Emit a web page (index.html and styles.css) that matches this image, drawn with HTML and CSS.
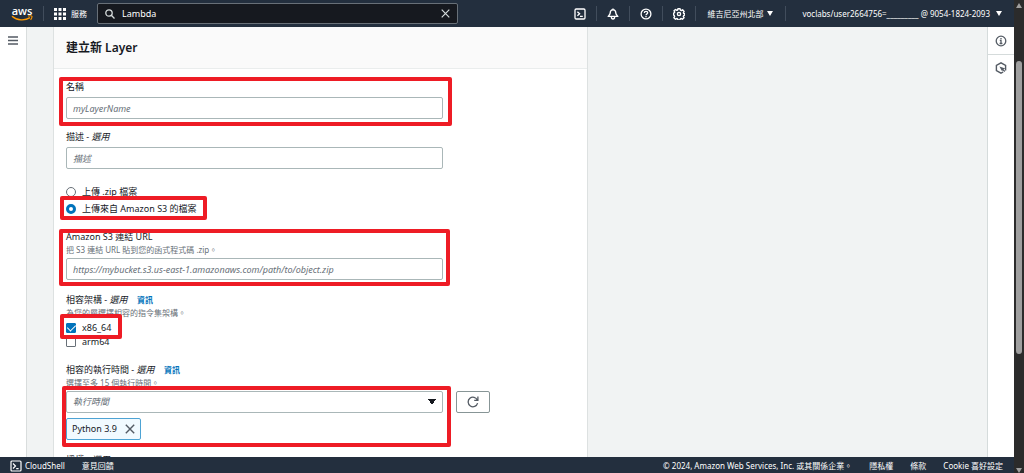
FILE: index.html
```html
<!DOCTYPE html>
<html lang="zh-Hant">
<head>
    <meta charset="UTF-8">
    <meta name="viewport" content="width=device-width, initial-scale=1.0">
    <title>Lambda - 建立新 Layer</title>
    <link rel="stylesheet" href="styles.css">
</head>
<body>
    <div class="page">
        <header class="topbar">
            <a href="#" class="logo">
                <span>aws</span>
                <svg width="22" height="6" viewBox="0 0 22 6" fill="none" stroke="#f90">
                    <path d="M1 1.2C6 5.6 14 6 19 2.6" stroke-width="1.4"/>
                    <path d="M17 1C19 .6 20.6.7 20.9 1.2 21.1 1.8 20.5 3.6 19.6 4.8" stroke-width="1.1"/>
                </svg>
            </a>
            <button type="button" class="services">
                <svg width="12" height="12" viewBox="0 0 12 12" fill="#fff">
                    <path d="M0 0h3v3H0zM4.5 0h3v3h-3zM9 0h3v3H9zM0 4.5h3v3H0zM4.5 4.5h3v3h-3zM9 4.5h3v3H9zM0 9h3v3H0zM4.5 9h3v3h-3zM9 9h3v3H9z"/>
                </svg>
                服務
            </button>
            <div class="search">
                <svg width="10" height="10" viewBox="0 0 10 10" fill="none" stroke="#d5dbdb" stroke-width="1.3">
                    <circle cx="4" cy="4" r="3.2"/>
                    <path d="M6.3 6.3 9.5 9.5"/>
                </svg>
                <input type="text" value="Lambda" aria-label="搜尋">
                <button type="button" aria-label="清除">
                    <svg width="9" height="9" viewBox="0 0 9 9" stroke="#d5dbdb" stroke-width="1.2">
                        <path d="M.7.7 8.3 8.3M8.3.7.7 8.3"/>
                    </svg>
                </button>
            </div>
            <nav class="tools">
                <button type="button" class="tool" aria-label="CloudShell">
                    <svg width="12" height="12" viewBox="0 0 12 12" fill="none" stroke="#fff" stroke-width="1.3">
                        <rect x="1" y="1" width="10" height="10" rx="1.2"/>
                        <path d="M3.4 3.8 5.6 5.8 3.4 7.8M6 8.4h2.8"/>
                    </svg>
                </button>
                <button type="button" class="tool" aria-label="通知">
                    <svg width="12" height="12" viewBox="0 0 12 12" fill="none" stroke="#fff" stroke-width="1.4" stroke-linejoin="round">
                        <path d="M6 .5v1.3M6 1.8C4.2 1.8 3.3 3 3.3 4.6 3.3 6.2 2.3 7 1.2 8.4H10.8C9.7 7 8.7 6.2 8.7 4.6 8.7 3 7.8 1.8 6 1.8Z"/>
                        <path d="M4.4 9a1.6 2 0 0 0 3.2 0"/>
                    </svg>
                </button>
                <button type="button" class="tool" aria-label="說明">
                    <svg width="12" height="12" viewBox="0 0 12 12" fill="none" stroke="#fff" stroke-width="1.3">
                        <circle cx="6" cy="6" r="4.9"/>
                        <path d="M4.3 4.9C4.3 2.7 7.7 2.8 7.7 4.8 7.7 5.9 6 5.8 6 7.2M6 8v1.2"/>
                    </svg>
                </button>
                <button type="button" class="tool" aria-label="設定">
                    <svg width="12" height="12" viewBox="0 0 12 12" fill="none" stroke="#fff" stroke-width="1.4" stroke-linejoin="round">
                        <path d="M4.9.8h2.2l.3 1.4.9.4 1.3-.8 1.5 1.6-.7 1.3.3.8 1.1.3v1.4l-1.1.4-.4.9.7 1.2-1.6 1.5-1.2-.7-.9.4-.3 1H4.9l-.3-1-.9-.4-1.2.7L.9 9.7l.7-1.2-.3-.9L.6 7V5.1l.8-.4.3-.7L1 2.7l1.5-1.2 1.3.9.8-.4z"/>
                        <circle cx="6" cy="6" r="1.6"/>
                    </svg>
                </button>
                <button type="button" class="tool region">維吉尼亞州北部 <i class="caret"></i></button>
                <button type="button" class="tool account">voclabs/user2664756=_________ @ 9054-1824-2093 <i class="caret"></i></button>
            </nav>
        </header>

        <div class="content">
            <aside class="side-nav">
                <button type="button" aria-label="開啟導覽">
                    <svg width="10" height="9" viewBox="0 0 10 9" stroke="#545b64" stroke-width="1.4">
                        <path d="M0 1h10M0 4.5h10M0 8h10"/>
                    </svg>
                </button>
            </aside>

            <main>
                <div class="card">
                    <div class="card-header">
                        <h1>建立新 Layer</h1>
                    </div>
                    <form class="card-body">
                        <div class="text-fields">
                            <div class="field marked mark-name">
                                <label for="layer-name">名稱</label>
                                <input type="text" id="layer-name" placeholder="myLayerName">
                            </div>
                            <div class="field">
                                <label for="layer-desc">描述 - <em>選用</em></label>
                                <input type="text" id="layer-desc" placeholder="描述">
                            </div>
                        </div>

                        <div class="radios">
                            <label class="choice"><input type="radio" name="source">上傳 .zip 檔案</label>
                            <label class="choice marked mark-source"><input type="radio" name="source" checked>上傳來自 Amazon S3 的檔案</label>
                        </div>

                        <div class="hinted marked mark-url">
                            <label for="s3-url">Amazon S3 連結 URL</label>
                            <p class="hint">把 S3 連結 URL 貼到您的函式程式碼 .zip。</p>
                            <input type="text" id="s3-url" placeholder="https://mybucket.s3.us-east-1.amazonaws.com/path/to/object.zip">
                        </div>

                        <div class="hinted">
                            <div class="caption">相容架構 - <em>選用</em> <a href="#">資訊</a></div>
                            <p class="hint">為您的層選擇相容的指令集架構。</p>
                            <div class="checks">
                                <label class="choice marked mark-arch"><input type="checkbox" checked>x86_64</label>
                                <label class="choice"><input type="checkbox">arm64</label>
                            </div>
                        </div>

                        <div class="hinted">
                            <div class="caption"><label for="runtime">相容的執行時間 - <em>選用</em></label> <a href="#">資訊</a></div>
                            <p class="hint">選擇至多 15 個執行時間。</p>
                            <div class="runtime-row">
                                <div class="runtime marked mark-runtime">
                                    <select id="runtime">
                                        <option>執行時間</option>
                                    </select>
                                    <span class="token">
                                        Python 3.9
                                        <button type="button" aria-label="移除 Python 3.9">
                                            <svg width="10" height="10" viewBox="0 0 10 10" stroke="#545b64" stroke-width="1.4">
                                                <path d="M.8.8 9.2 9.2M9.2.8.8 9.2"/>
                                            </svg>
                                        </button>
                                    </span>
                                </div>
                                <button type="button" class="refresh" aria-label="重新整理">
                                    <svg width="12" height="12" viewBox="0 0 12 12" fill="none" stroke="#545b64" stroke-width="1.3">
                                        <path d="M10.6 7.2A4.8 4.8 0 1 1 10.4 4.2M10.9.6V4.4H7.2"/>
                                    </svg>
                                </button>
                            </div>
                        </div>

                        <div class="field">
                            <label for="license">授權 - <em>選用</em></label>
                            <input type="text" id="license">
                        </div>
                    </form>
                </div>
            </main>

            <aside class="help-panel">
                <button type="button" aria-label="資訊">
                    <svg width="12" height="12" viewBox="0 0 12 12" fill="none" stroke="#545b64" stroke-width="1.3">
                        <circle cx="6" cy="6" r="4.8"/>
                        <path d="M6 3v1.2M4.8 5.3H6v3.2M4.6 8.5h2.8"/>
                    </svg>
                </button>
                <button type="button" aria-label="教學課程">
                    <svg width="12" height="12" viewBox="0 0 12 12" fill="none" stroke="#545b64" stroke-width="1.4">
                        <path d="M8.2 10 6 11.2 1.4 8.6V3.4L6 .8l4.6 2.6v5.2"/>
                        <path d="M4.4 4.4 10.4 6.6 7.9 7.5 7.2 9.4Z" fill="#545b64" stroke="none"/>
                        <path d="M7.3 7 9.8 9.4"/>
                    </svg>
                </button>
            </aside>
        </div>

        <footer class="footer">
            <button type="button" class="shell">
                <svg width="12" height="12" viewBox="0 0 12 12" fill="none" stroke="#fff" stroke-width="1.2">
                    <rect x="1" y="1" width="10" height="10" rx="1"/>
                    <path d="M3 3.5 5.5 6 3 8.5M6.2 8.6h2.4"/>
                </svg>
                CloudShell
            </button>
            <a href="#">意見回饋</a>
            <span class="copyright">© 2024, Amazon Web Services, Inc. 或其關係企業。</span>
            <a href="#">隱私權</a>
            <a href="#">條款</a>
            <a href="#">Cookie 喜好設定</a>
        </footer>
    </div>

    <div class="scrollbar">
        <i class="arrow-up"></i>
        <div class="track">
            <div class="thumb"></div>
        </div>
        <i class="arrow-down"></i>
    </div>
</body>
</html>
```
FILE: styles.css
```css
* {
    box-sizing: border-box;
}
body {
    margin: 0;
    height: 100vh;
    display: flex;
    overflow: hidden;
    font-family: "Noto Sans", "Noto Sans CJK TC", sans-serif;
    font-size: 9px;
    line-height: 14px;
    color: #16191f;
    background: #f1f3f3;
}
button,
input,
select {
    font: inherit;
    color: inherit;
}
button {
    padding: 0;
    border: none;
    background: none;
    cursor: pointer;
}
a {
    color: #0073bb;
    text-decoration: none;
}
svg {
    display: block;
    flex: none;
}
.page {
    flex: 1;
    min-width: 0;
    display: flex;
    flex-direction: column;
}

/* top bar */
.topbar {
    flex: none;
    display: flex;
    align-items: center;
    height: 27px;
    padding-left: 11px;
    background: #232f3e;
    color: #fff;
    font-size: 8px;
}
.logo {
    display: flex;
    flex-direction: column;
    align-items: center;
    width: 22px;
    color: #fff;
    font-family: "Open Sans", sans-serif;
    font-size: 11px;
    font-weight: 600;
    line-height: 9px;
}
.services {
    display: flex;
    align-items: center;
    gap: 5px;
    height: 15px;
    margin: 0 10px;
    padding-left: 10px;
    border-left: 1px solid #414d5c;
    white-space: nowrap;
}
.search {
    flex: 0 1 361px;
    display: flex;
    align-items: center;
    gap: 7px;
    height: 21px;
    padding: 0 7px;
    border: 1px solid #687078;
    border-radius: 2px;
    background: #16191f;
}
.search input {
    flex: 1;
    min-width: 0;
    padding: 0;
    border: none;
    background: none;
    font-size: 9px;
    outline: none;
}
.tools {
    display: flex;
    align-items: center;
    margin-left: auto;
}
.tool {
    display: flex;
    align-items: center;
    justify-content: center;
    gap: 4px;
    width: 33px;
    height: 15px;
    border-left: 1px solid #414d5c;
    white-space: nowrap;
}
.tool:first-child {
    border-left: none;
}
.region,
.account {
    width: auto;
    padding: 0 12px 0 11px;
}
.account {
    gap: 6px;
    padding-left: 16px;
}
.caret {
    border: 3px solid transparent;
    border-top: 5px solid #fff;
    border-bottom: none;
}

/* middle area */
.content {
    flex: 1;
    min-height: 0;
    display: flex;
    overflow: hidden;
}
.side-nav,
.help-panel {
    flex: none;
    width: 27px;
    background: #fff;
}
.side-nav {
    border-right: 1px solid #d9dddd;
}
.help-panel {
    border-left: 1px solid #d5dbdb;
}
.side-nav button,
.help-panel button {
    display: flex;
    align-items: center;
    justify-content: center;
    width: 100%;
    height: 27px;
}
.help-panel button + button {
    border-top: 1px solid #d5dbdb;
}
main {
    flex: 1;
    min-width: 0;
    padding: 0 26px;
}
.card {
    max-width: 535px;
    border: 1px solid #dde1e1;
    border-width: 0 1px;
    background: #fff;
}
.card-header {
    padding: 12px;
    border-bottom: 1px solid #eaeded;
    background: #fafafa;
}
h1 {
    margin: 0;
    font-size: 12px;
    font-weight: 600;
    line-height: 17px;
}
.card-body {
    display: flex;
    flex-direction: column;
    gap: 13px;
    padding: 11px 12px;
}

/* form */
.text-fields {
    display: flex;
    flex-direction: column;
    gap: 11px;
}
.field {
    display: flex;
    flex-direction: column;
    gap: 3px;
}
.field,
.hinted {
    max-width: 377px;
}
.hinted > label {
    display: block;
}
.caption a {
    margin-left: 7px;
    font-size: 8px;
    font-weight: 600;
}
.hint {
    margin: 0 0 2px;
    font-size: 8px;
    line-height: 12px;
    color: #687078;
}
input[type="text"],
select {
    width: 100%;
    display: block;
}
.card-body input[type="text"],
select {
    height: 22px;
    padding: 0 6px;
    border: 1px solid #aab7b8;
    border-radius: 2px;
    background: #fff;
}
input::placeholder {
    color: #687078;
    font-style: italic;
    opacity: 1;
}
.radios {
    display: flex;
    flex-direction: column;
    align-items: flex-start;
    gap: 3px;
    padding: 3px 0 1px;
}
.checks {
    display: flex;
    flex-direction: column;
    align-items: flex-start;
    padding-bottom: 1px;
}
.choice {
    display: flex;
    align-items: center;
    gap: 6px;
}
.choice input {
    appearance: none;
    width: 10px;
    height: 10px;
    margin: 0;
    border: 1px solid #687078;
    border-radius: 1px;
    background: #fff;
}
.choice input[type="radio"] {
    border-radius: 50%;
}
.choice input[type="radio"]:checked {
    border: 3px solid #0073bb;
}
.choice input[type="checkbox"]:checked {
    border-color: #0073bb;
    background: #0073bb;
    display: flex;
    align-items: center;
    justify-content: center;
}
.choice input[type="checkbox"]:checked::before {
    content: "";
    width: 4px;
    height: 7px;
    margin-bottom: 2px;
    border: solid #fff;
    border-width: 0 1px 1px 0;
    transform: rotate(45deg);
}
.runtime-row {
    display: flex;
    align-items: flex-start;
    gap: 13px;
}
.runtime {
    flex: none;
    width: 100%;
}
.runtime select {
    appearance: none;
    color: #687078;
    font-style: italic;
    background: #fff conic-gradient(from -34deg at 50% 100%, #16191f 68deg, transparent 0) no-repeat right 6px center / 8px 6px;
}
.token {
    display: inline-flex;
    align-items: center;
    gap: 8px;
    height: 22px;
    margin-top: 5px;
    padding: 0 5px;
    border: 1px solid #4da3d4;
    border-radius: 2px;
    background: #f1faff;
}
.refresh {
    flex: none;
    display: flex;
    align-items: center;
    justify-content: center;
    width: 34px;
    height: 22px;
    border: 1px solid #879596;
    border-radius: 2px;
}

/* red frames over the steps to fill in */
.marked {
    position: relative;
}
.marked::after {
    content: "";
    position: absolute;
    border: 4px solid #ee1c25;
    border-radius: 2px;
    pointer-events: none;
}
.mark-name::after {
    inset: -3px -9px -7px -7px;
}
.mark-source::after {
    inset: -6px -10px -4px -6px;
}
.mark-url::after {
    inset: -1px -7px -6px -7px;
}
.mark-arch::after {
    inset: -7px -11px -4px -6px;
}
.mark-runtime::after {
    inset: -5px -8px -7px -4px;
}

/* footer */
.footer {
    flex: none;
    display: flex;
    align-items: center;
    gap: 17px;
    height: 16px;
    padding: 2px 11px 0 10px;
    background: #232f3e;
    color: #fff;
    font-size: 8px;
    white-space: nowrap;
}
.footer a {
    color: #fff;
}
.shell {
    display: flex;
    align-items: center;
    gap: 3px;
}
.copyright {
    margin-left: auto;
}

/* scrollbar */
.scrollbar {
    flex: none;
    display: flex;
    flex-direction: column;
    align-items: center;
    width: 10px;
    padding: 3px 0 0;
    background: #2b2b2b;
}
.arrow-up,
.arrow-down {
    border: 3px solid transparent;
}
.arrow-up {
    border-top: none;
    border-bottom: 5px solid #9f9f9f;
}
.arrow-down {
    border-bottom: none;
    border-top: 5px solid #9f9f9f;
}
.track {
    flex: 1;
    display: flex;
    flex-direction: column;
    width: 6px;
}
.track::before {
    content: "";
    flex: 53;
}
.track::after {
    content: "";
    flex: 114;
}
.thumb {
    flex: 293;
    border-radius: 3px;
    background: #9f9f9f;
}
```
